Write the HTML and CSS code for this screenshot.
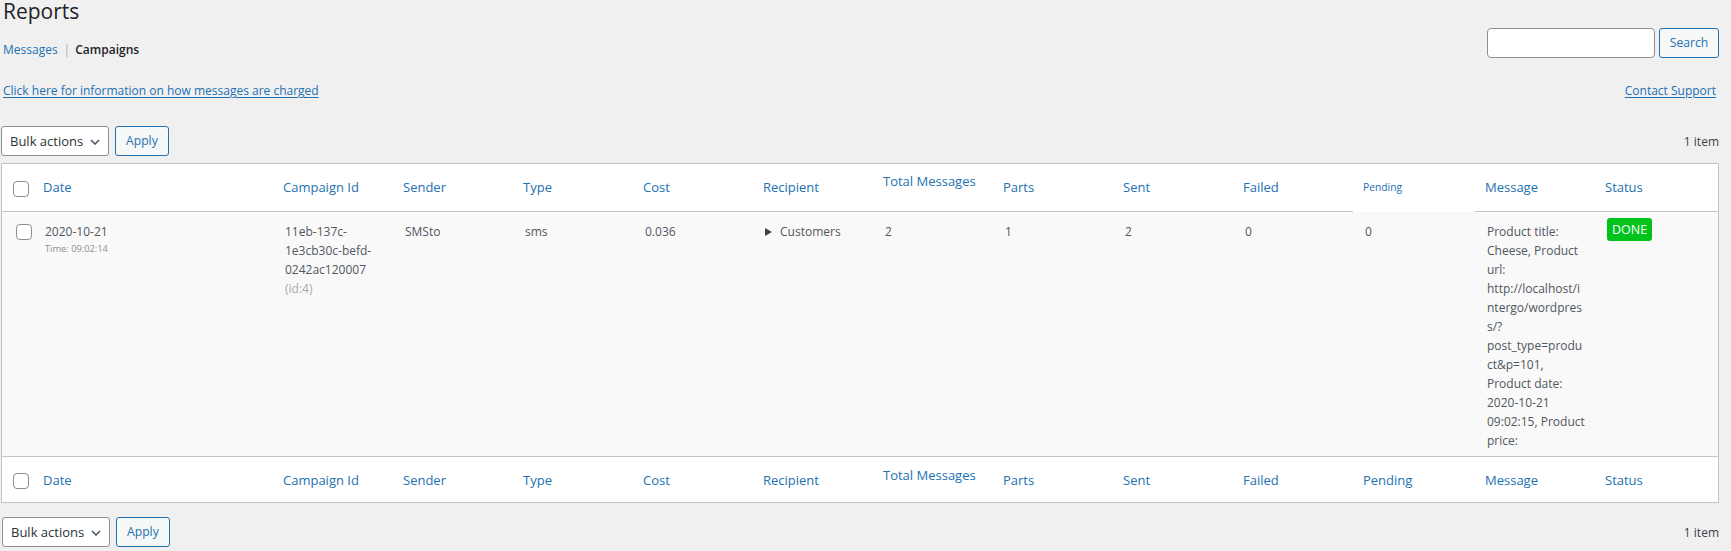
FILE: index.html
```html
<!DOCTYPE html>
<html lang="en">
<head>
<meta charset="utf-8">
<title>Reports</title>
<link rel="stylesheet" href="styles.css">
</head>
<body>
<div class="wrap">
  <h1 class="page-title">Reports</h1>

  <div class="top-row">
    <ul class="subsubsub">
      <li><a href="#" class="sub-link">Messages</a><span class="sep">|</span></li>
      <li><a href="#" class="sub-link current">Campaigns</a></li>
    </ul>
    <div class="search-box">
      <input type="search" class="search-input" aria-label="Search">
      <button class="button">Search</button>
    </div>
  </div>

  <div class="links-row">
    <a href="#" class="ulink">Click here for information on how messages are charged</a>
    <a href="#" class="ulink">Contact Support</a>
  </div>

  <div class="tablenav top">
    <div class="actions">
      <div class="select-mock">
        <span>Bulk actions</span>
        <svg class="chev" width="10" height="6" viewBox="0 0 10 6"><path d="M1 1 L5 5 L9 1" fill="none" stroke="#50575e" stroke-width="1.6"/></svg>
      </div>
      <button class="button">Apply</button>
    </div>
    <span class="count">1 item</span>
  </div>

  <table class="list-table">
    <colgroup>
      <col class="c-cb"><col class="c-date"><col class="c-std"><col class="c-std"><col class="c-std"><col class="c-std"><col class="c-std"><col class="c-std"><col class="c-std"><col class="c-std"><col class="c-std"><col class="c-pend"><col class="c-std"><col>
    </colgroup>
    <thead>
      <tr>
        <th class="check-col"><input type="checkbox" class="cb"></th>
        <th><a href="#">Date</a></th>
        <th><a href="#">Campaign Id</a></th>
        <th><a href="#">Sender</a></th>
        <th><a href="#">Type</a></th>
        <th><a href="#">Cost</a></th>
        <th><a href="#">Recipient</a></th>
        <th class="raised"><a href="#">Total Messages</a></th>
        <th><a href="#">Parts</a></th>
        <th><a href="#">Sent</a></th>
        <th><a href="#">Failed</a></th>
        <th class="pending"><a href="#">Pending</a></th>
        <th><a href="#">Message</a></th>
        <th><a href="#">Status</a></th>
      </tr>
    </thead>
    <tbody>
      <tr>
        <th class="check-col"><input type="checkbox" class="cb"></th>
        <td>2020-10-21<span class="time">Time: 09:02:14</span></td>
        <td>11eb-137c-1e3cb30c-befd-0242ac120007<span class="muted">(id:4)</span></td>
        <td>SMSto</td>
        <td>sms</td>
        <td>0.036</td>
        <td><span class="recipient"><span class="tri"></span>Customers</span></td>
        <td>2</td>
        <td>1</td>
        <td>2</td>
        <td>0</td>
        <td>0</td>
        <td class="msg">Product title: Cheese, Product url: http://localhost/intergo/wordpress/?post_type=product&amp;p=101, Product date: 2020-10-21 09:02:15, Product price:</td>
        <td><span class="badge">DONE</span></td>
      </tr>
    </tbody>
    <tfoot>
      <tr>
        <th class="check-col"><input type="checkbox" class="cb"></th>
        <th><a href="#">Date</a></th>
        <th><a href="#">Campaign Id</a></th>
        <th><a href="#">Sender</a></th>
        <th><a href="#">Type</a></th>
        <th><a href="#">Cost</a></th>
        <th><a href="#">Recipient</a></th>
        <th class="raised"><a href="#">Total Messages</a></th>
        <th><a href="#">Parts</a></th>
        <th><a href="#">Sent</a></th>
        <th><a href="#">Failed</a></th>
        <th><a href="#">Pending</a></th>
        <th><a href="#">Message</a></th>
        <th><a href="#">Status</a></th>
      </tr>
    </tfoot>
  </table>

  <div class="tablenav bottom">
    <div class="actions">
      <div class="select-mock">
        <span>Bulk actions</span>
        <svg class="chev" width="10" height="6" viewBox="0 0 10 6"><path d="M1 1 L5 5 L9 1" fill="none" stroke="#50575e" stroke-width="1.6"/></svg>
      </div>
      <button class="button">Apply</button>
    </div>
    <span class="count">1 item</span>
  </div>
</div>
</body>
</html>
```
FILE: styles.css
```css
html, body {
  margin: 0;
  padding: 0;
}
body {
  background: #f0f0f1;
  font-family: "Open Sans", "Noto Sans", sans-serif;
  font-size: 12px;
  line-height: 19px;
  color: #3c434a;
}
a {
  color: #2271b1;
  text-decoration: none;
}
.wrap {
  width: 1718px;
  margin: 0 0 0 1px;
}
.page-title {
  font-size: 21px;
  font-weight: 400;
  line-height: 29px;
  color: #1d2327;
  margin: -3px 0 0 2px;
}
.top-row {
  display: flex;
  justify-content: space-between;
  align-items: flex-start;
  margin-top: 2px;
  height: 30px;
}
.subsubsub {
  list-style: none;
  margin: 12px 0 0 2px;
  padding: 0;
  display: flex;
}
.subsubsub li {
  display: flex;
}
.sep {
  color: #a7aaad;
  margin: 0 5px 0 6px;
}
.sub-link.current {
  color: #1d2327;
  font-weight: 600;
}
.search-box {
  display: flex;
  gap: 4px;
}
.search-input {
  box-sizing: border-box;
  width: 168px;
  height: 30px;
  border: 1px solid #8c8f94;
  border-radius: 4px;
  background: #fff;
  margin: 0;
  padding: 0 8px;
}
.button {
  box-sizing: border-box;
  height: 30px;
  border: 1px solid #2271b1;
  border-radius: 3px;
  background: #f6f7f7;
  color: #2271b1;
  font-family: "Open Sans", "Noto Sans", sans-serif;
  font-size: 12.2px;
  padding: 0 10px;
  margin: 0;
  line-height: 28px;
}
.search-box .button {
  width: 60px;
  padding: 0;
}
.links-row {
  display: flex;
  justify-content: space-between;
  margin-top: 23px;
  padding: 0 3px 0 2px;
}
.ulink {
  text-decoration: underline;
  text-underline-offset: 2px;
}
.tablenav {
  display: flex;
  justify-content: space-between;
  align-items: center;
  height: 30px;
}
.tablenav.top {
  margin-top: 26px;
}
.tablenav.bottom {
  margin-top: 14px;
}
.actions {
  display: flex;
  gap: 6px;
}
.tablenav.bottom .actions {
  padding-left: 1px;
}
.select-mock {
  box-sizing: border-box;
  width: 108px;
  height: 30px;
  border: 1px solid #8c8f94;
  border-radius: 3px;
  background: #fff;
  color: #2c3338;
  font-size: 13px;
  display: flex;
  align-items: center;
  justify-content: space-between;
  padding: 0 8px 0 8px;
}
.chev {
  display: block;
  margin-top: 1px;
}
.count {
  color: #3c434a;
}
.list-table {
  margin-top: 7px;
  width: 1718px;
  table-layout: fixed;
  border-collapse: separate;
  border-spacing: 0;
  border: 1px solid #c3c4c7;
  background: #fff;
}
.c-cb { width: 31px; }
.c-date { width: 240px; }
.c-std { width: 120px; }
.c-pend { width: 122px; }
.list-table thead th,
.list-table tfoot th {
  text-align: left;
  font-weight: 400;
  font-size: 13px;
  line-height: 19px;
  vertical-align: top;
}
.list-table thead th {
  padding: 14px 10px 14px;
  border-bottom: 1px solid #c3c4c7;
}
.list-table tfoot th {
  padding: 14px 10px 12px;
  border-top: 1px solid #c3c4c7;
}
.list-table thead th.raised {
  padding-top: 8px;
}
.list-table tfoot th.raised {
  padding-top: 9px;
}
.list-table thead th.pending {
  border-bottom-color: #fff;
  font-size: 10.3px;
}
.list-table th.check-col {
  padding: 0;
}
.list-table thead th.check-col {
  padding: 17px 0 0 11px;
}
.list-table tfoot th.check-col {
  padding: 16px 0 0 11px;
}
.list-table tbody th.check-col {
  padding: 12px 0 0 14px;
  vertical-align: top;
  text-align: left;
}
.cb {
  appearance: none;
  -webkit-appearance: none;
  display: block;
  box-sizing: border-box;
  width: 16px;
  height: 16px;
  margin: 0;
  border: 1px solid #8c8f94;
  border-radius: 4px;
  background: #fff;
}
.list-table tbody tr {
  background: #f9f9f9;
}
.list-table tbody td {
  padding: 10px 10px 6px 12px;
  vertical-align: top;
  color: #50575e;
  overflow-wrap: break-word;
}
.time {
  display: block;
  font-size: 9.3px;
  line-height: 16px;
  color: #8c8f94;
}
.muted {
  display: block;
  color: #a7aaad;
}
.recipient {
  display: flex;
  align-items: center;
  gap: 8px;
}
.tri {
  width: 0;
  height: 0;
  border-left: 7px solid #3c434a;
  border-top: 4px solid transparent;
  border-bottom: 4px solid transparent;
}
.msg {
  overflow-wrap: anywhere;
}
.badge {
  display: block;
  width: fit-content;
  margin-top: -4px;
  padding: 0 5px;
  background: #00c31b;
  color: #fff;
  font-size: 12.5px;
  line-height: 23px;
  border-radius: 3px;
}
```
